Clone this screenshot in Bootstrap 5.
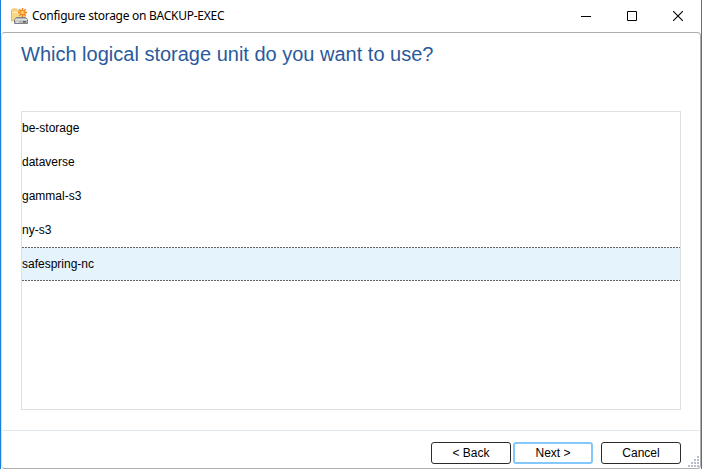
<!DOCTYPE html>
<html lang="en">
<head>
<meta charset="utf-8">
<meta name="viewport" content="width=device-width, initial-scale=1">
<title>Configure storage on BACKUP-EXEC</title>
<link href="https://cdn.jsdelivr.net/npm/bootstrap@5.3.0/dist/css/bootstrap.min.css" rel="stylesheet">
<style>
body { font-family: "Liberation Sans", Arial, sans-serif; font-size: 12px; color: #000; }
.wizard { height: 469px; margin-right: 1px; border-left: 1px solid #1a80d8; border-right: 1px solid #1a80d8; }
.titlebar { height: 32px; padding-left: 10px; }
.titlebar-text { font-family: "Noto Sans", sans-serif; font-size: 12px; line-height: 16px; letter-spacing: -.27px; margin-left: 4px; }
.win-btn { width: 46px; height: 31px; }
.panel { border: 1px solid #adadad; border-left-color: #d4e0ea; border-radius: 4px; }
.question { font-size: 20px; line-height: 24px; color: #2a5a9c; margin: 9px 0 0 19px; }
.units { margin: 45px 19px 0; height: 299px; border: 1px solid #e0e0e0; }
.units .list-group-item { height: 34px; padding: 0; line-height: 33px; color: #000; background: none; border: 0; }
.units .list-group-item.chosen {
  --dots: repeating-linear-gradient(90deg, #666 0 2px, #e5f3fd 2px 3px);
  margin-top: -1px; line-height: 34px;
  background: var(--dots) top / 100% 1px no-repeat, var(--dots) bottom / 100% 1px no-repeat, #e5f3fd;
}
.actions { margin-top: 20px; border-top: 1px solid #e2e9ef; padding: 11px 19px 0 0; }
.actions .btn { width: 80px; height: 22px; padding: 0; font-size: 12px; line-height: 20px; color: #000; background: #fff; border: 1px solid #2b2b2b; border-radius: 3px; }
.actions .btn.default { border: 2px solid #84c8fb; line-height: 18px; margin: 0 8px 0 2px; }
.grip { right: 1px; bottom: 1px; }
</style>
</head>
<body class="bg-white overflow-hidden">
<div class="wizard d-flex flex-column">
  <header class="titlebar d-flex align-items-center flex-shrink-0">
    <svg width="17" height="16" viewBox="0 0 17 16" aria-hidden="true">
      <path d="M.5 13V2.2L1.5 1h4l1.3 1.5H14V12z" fill="#f7d78a" stroke="#e5b95b"/>
      <path d="M1.5 4.5h11" stroke="#fff0c2"/>
      <path d="M5.3 9.5h9.5l1.7 2.2v3.8h-13v-3.8z" fill="#b4b7ba" stroke="#808386"/>
      <path d="M4 11.8h12M5 14h3" stroke="#f2f2f2"/>
      <path d="M12 13h3v1.5h-3z" fill="#59605c"/>
      <path d="M11.5 0v9M7 4.5h9M8.3 1.3l6.4 6.4M14.7 1.3 8.3 7.7" stroke="#f5821f" stroke-width="1.4"/>
      <circle cx="11.5" cy="4.5" r="1.7" fill="#ffd45c"/>
    </svg>
    <span class="titlebar-text text-nowrap">Configure storage on BACKUP-EXEC</span>
    <div class="d-flex ms-auto">
      <span class="win-btn d-flex align-items-center justify-content-center"><svg width="10" height="10"><path d="M0 5.5h10" stroke="#000"/></svg></span>
      <span class="win-btn d-flex align-items-center justify-content-center"><svg width="10" height="10"><path d="M.5.5h9v9h-9z" fill="none" stroke="#000"/></svg></span>
      <span class="win-btn d-flex align-items-center justify-content-center"><svg width="10" height="10"><path d="M0 0l10 10M10 0L0 10" stroke="#000" stroke-width="1.1"/></svg></span>
    </div>
  </header>
  <main class="panel flex-grow-1 position-relative">
    <h1 class="question fw-normal text-nowrap">Which logical storage unit do you want to use?</h1>
    <div class="units list-group list-group-flush rounded-0">
      <div class="list-group-item">be-storage</div>
      <div class="list-group-item">dataverse</div>
      <div class="list-group-item">gammal-s3</div>
      <div class="list-group-item">ny-s3</div>
      <div class="list-group-item chosen">safespring-nc</div>
    </div>
    <div class="actions d-flex justify-content-end">
      <button class="btn">&lt; Back</button>
      <button class="btn default">Next &gt;</button>
      <button class="btn">Cancel</button>
    </div>
    <svg class="grip position-absolute" width="11" height="11" fill="#b9bfca"><path d="M9 0h2v2H9zM6 3h2v2H6zM9 3h2v2H9zM3 6h2v2H3zM6 6h2v2H6zM9 6h2v2H9zM0 9h2v2H0zM3 9h2v2H3zM6 9h2v2H6zM9 9h2v2H9z"/></svg>
  </main>
</div>
<script src="https://cdn.jsdelivr.net/npm/bootstrap@5.3.0/dist/js/bootstrap.bundle.min.js"></script>
</body>
</html>
